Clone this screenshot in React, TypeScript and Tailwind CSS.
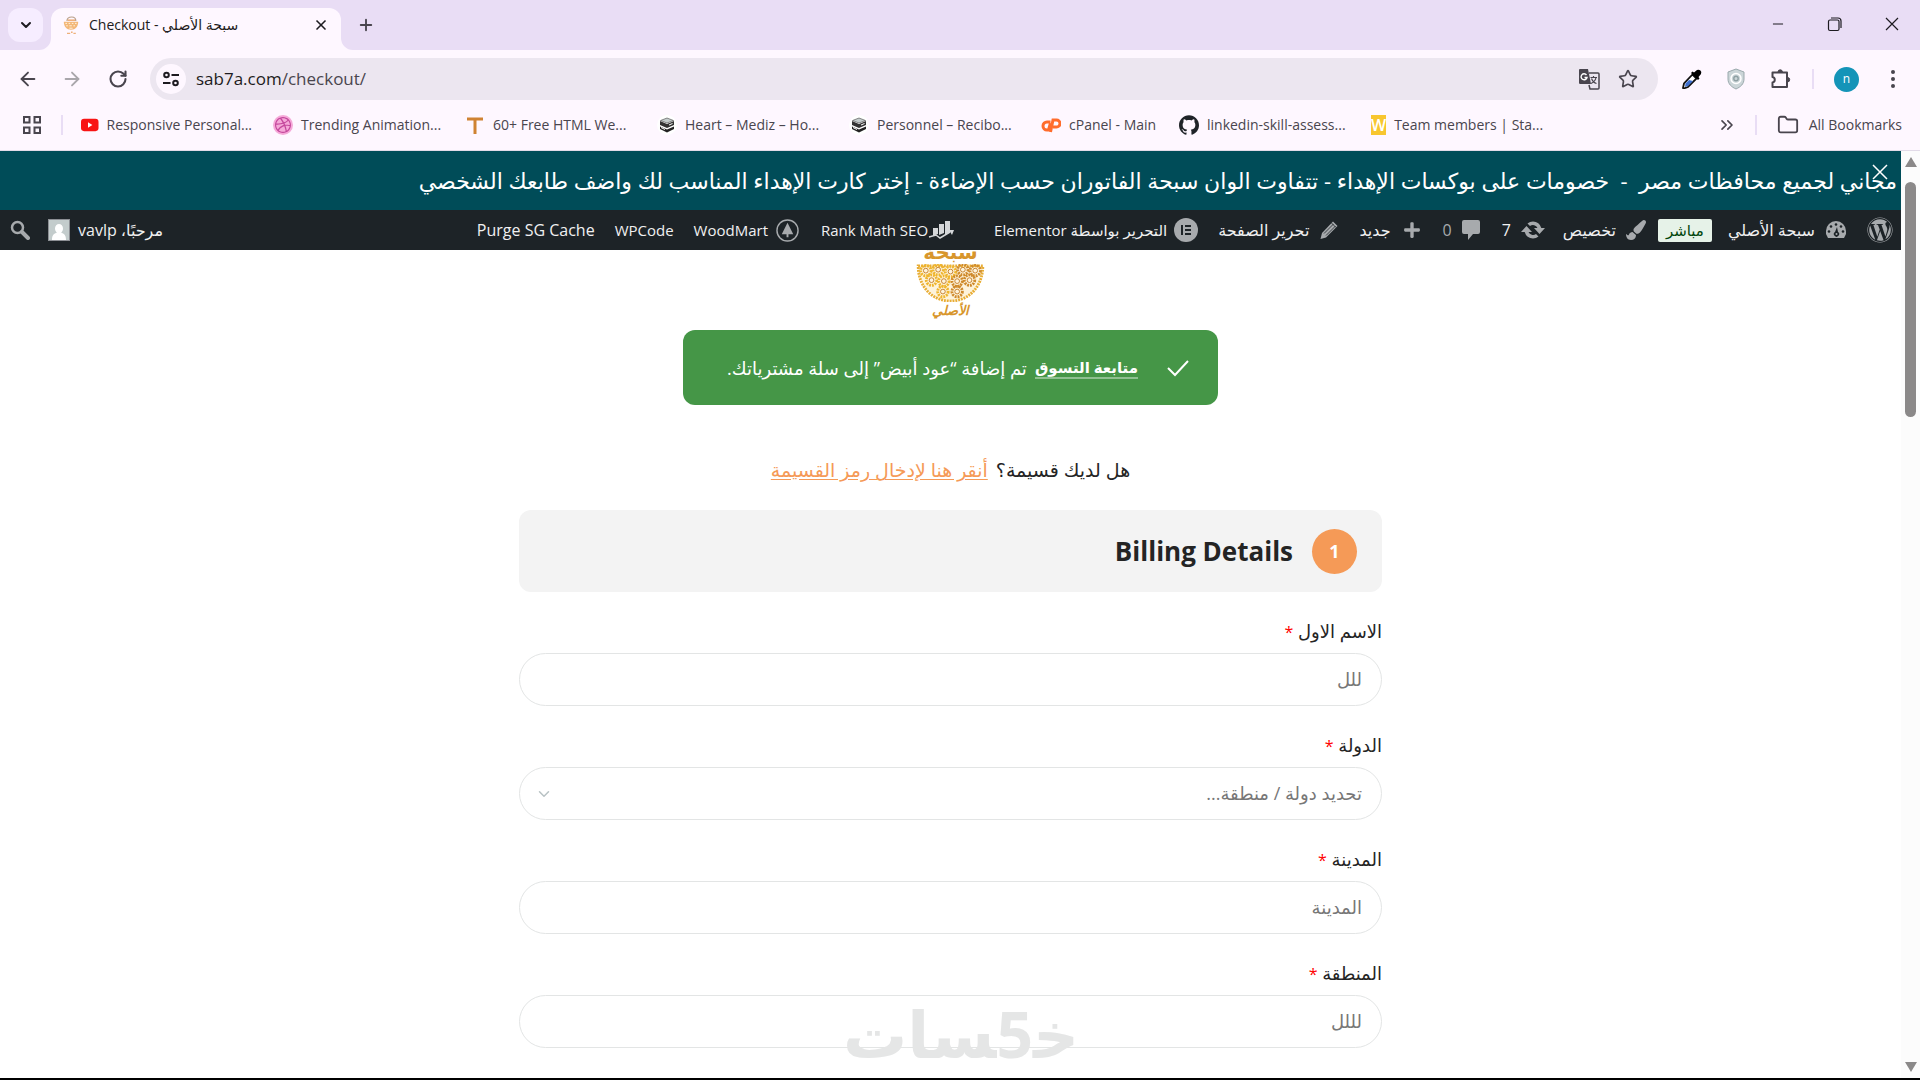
import React from 'react';
import { FaWordpress, FaPlus, FaPaintBrush } from 'react-icons/fa';
import { SiDribbble, SiGithub } from 'react-icons/si';
import { ArrowLeft, ArrowRight, ChevronDown, ChevronsRight, Folder, Minus, Plus, RotateCw, Star, X } from 'lucide-react';

const barText = "font-['Open_Sans','DejaVu_Sans',sans-serif]";

function SiteIcon({ className }: { className: string }) {
  return (
    <svg viewBox="0 0 20 24" className={className} aria-hidden="true">
      <path d="M5 7C5 3 8 2 11 2s5 2 5 5" fill="none" stroke="#b9a08a" strokeWidth="1.500" />
      <path d="M6 6h9" stroke="#eeb07a" strokeWidth="2" />
      <path d="M1 8h18c0 6-3.500 10-9 10S1 14 1 8z" fill="#f3b778" />
      <path d="M3 10h2m2 0h2m2 0h2m2 0h2M4 13h2m2 0h3m2 0h2M8 16h4" stroke="#fff3e0" strokeWidth="1.200" />
      <path d="M5 22.500h4m1-1.500h2m1 1.500h3" stroke="#eeb07a" strokeWidth="1.800" />
    </svg>
  );
}

function BoxIcon() {
  return (
    <svg viewBox="0 0 20 20" className="h-5 w-5" aria-hidden="true">
      <circle cx="10" cy="10" r="10" fill="#fff" />
      <path d="M3 6v4l7 3 7-3V6l-7 3z" fill="#333" />
      <path d="M10 3 3.500 5.500l6.500 2.500 6.500-2.500z" fill="#c4cccc" stroke="#444" strokeWidth=".6" />
      <path d="M3 11.500V14l7 3.500 7-3.500v-2.500l-7 3z" fill="#222" />
      <path d="m12 10 3.500-1.500M4 12.500l4 2" stroke="#fff" />
    </svg>
  );
}

const bookmarks = [
  {
    label: 'Responsive Personal...',
    icon: (
      <svg viewBox="0 0 20 20" className="h-5 w-5">
        <rect y="3" width="20" height="14" rx="3.500" fill="#f81414" />
        <path d="M8 7v6l5-3z" fill="#fff" />
      </svg>
    ),
  },
  {
    label: 'Trending Animation...',
    icon: (
      <span className="flex h-5 w-5 items-center justify-center rounded-full bg-[#f5a8d8]">
        <SiDribbble className="h-4 w-4 text-[#c4479c]" />
      </span>
    ),
  },
  {
    label: '60+ Free HTML We...',
    icon: (
      <svg viewBox="0 0 20 20" className="h-5 w-5">
        <path d="M2 4h16M10 4v15" fill="none" stroke="#cf8333" strokeWidth="3" />
      </svg>
    ),
  },
  { label: 'Heart – Mediz – Ho...', icon: <BoxIcon /> },
  { label: 'Personnel – Recibo...', icon: <BoxIcon /> },
  {
    label: 'cPanel - Main',
    short: true,
    icon: (
      <svg viewBox="0 0 20 20" className="h-5 w-5" fill="none" stroke="#ff6c2c" strokeWidth="3">
        <path d="M9.500 7H6a4 4 0 0 0 0 8h1.500l2-7" />
        <path d="m9.500 17 2.500-12h3.500a3.500 3.500 0 0 1 0 7H12" />
      </svg>
    ),
  },
  { label: 'linkedin-skill-assess...', icon: <SiGithub className="h-5 w-5 text-[#1f2328]" /> },
  {
    label: 'Team members | Sta...',
    icon: <span className="flex h-5 w-5 items-center justify-center bg-[#f8c62f] text-base font-semibold text-white">W</span>,
  },
];

function TabStrip() {
  return (
    <div className="flex h-[50px] items-end bg-[#e9ddf5] text-[#1d1b20]">
      <button aria-label="Search tabs" className="mb-2 ml-2 flex h-[34px] w-[35px] items-center justify-center rounded-xl bg-[#f6edff]">
        <ChevronDown className="h-4 w-4" strokeWidth={3} />
      </button>
      <svg viewBox="0 0 12 12" className="-ml-1 h-3 w-3">
        <path d="M12 0v12H0A12 12 0 0 0 12 0z" fill="#fef7ff" />
      </svg>
      <div className="flex h-[42px] w-[290px] items-center rounded-t-xl bg-[#fef7ff] px-3 pb-2">
        <SiteIcon className="h-5 w-4" />
        <span className="ml-[10px] flex-1 text-sm whitespace-nowrap">Checkout - سبحة الأصلي</span>
        <button aria-label="Close tab">
          <X className="h-4 w-4" strokeWidth={2.5} />
        </button>
      </div>
      <svg viewBox="0 0 12 12" className="h-3 w-3">
        <path d="M0 0v12h12A12 12 0 0 1 0 0z" fill="#fef7ff" />
      </svg>
      <button aria-label="New tab" className="mb-4 ml-1">
        <Plus className="h-[18px] w-[18px] text-[#49454e]" strokeWidth={2.5} />
      </button>
      <div className="mr-5 mb-[18px] ml-auto flex items-center gap-[41px]">
        <button aria-label="Minimize">
          <Minus className="h-4 w-4" strokeWidth={1.5} />
        </button>
        <button aria-label="Restore">
          <svg viewBox="0 0 16 16" className="h-4 w-4" fill="none" stroke="#1d1b20" strokeWidth="1.200">
            <rect x="1.500" y="4" width="10.500" height="10.500" rx="1.500" />
            <path d="M4 2h7a3 3 0 0 1 3 3v7" />
          </svg>
        </button>
        <button aria-label="Close window">
          <svg viewBox="0 0 16 16" className="h-4 w-4" stroke="#1d1b20" strokeWidth="1.200">
            <path d="m2 2 12 12M14 2 2 14" />
          </svg>
        </button>
      </div>
    </div>
  );
}

function Toolbar() {
  return (
    <div className="flex h-[58px] items-center bg-[#fef7ff] px-[17px] text-[#49454e]">
      <button aria-label="Back">
        <ArrowLeft className="h-[22px] w-[22px]" />
      </button>
      <button aria-label="Forward" className="ml-[22px] text-[#a9a6ab]">
        <ArrowRight className="h-[22px] w-[22px]" />
      </button>
      <button aria-label="Reload" className="ml-[25px]">
        <RotateCw className="h-5 w-5" strokeWidth={2.5} />
      </button>
      <div className="ml-[22px] flex h-[42px] flex-1 items-center rounded-full bg-[#ece6f0] pr-5 pl-[6px]">
        <button aria-label="Site information" className="flex h-[30px] w-[30px] items-center justify-center rounded-full bg-[#fef7ff]">
          <svg viewBox="0 0 16 16" className="h-4 w-4" fill="none" stroke="#1d1b20" strokeWidth="2">
            <circle cx="3.500" cy="4" r="2.300" />
            <path d="M8.500 4H16M0 12h7.500" />
            <circle cx="12.500" cy="12" r="2.300" />
          </svg>
        </button>
        <div className="ml-[10px] flex-1 text-[17px] text-[#49454e]">
          <a href="#checkout">
            <span className="text-[#1d1b20]">sab7a.com</span>/checkout/
          </a>
        </div>
        <button aria-label="Translate this page">
          <svg viewBox="0 0 22 22" className="h-[22px] w-[22px]">
            <path d="M2 1h8l3 15H2a1.500 1.500 0 0 1-1-1V2a1 1 0 0 1 1-1z" fill="#49454e" />
            <path d="M11 5h9a1 1 0 0 1 1 1v14a1 1 0 0 1-1 1h-8l-1-4" fill="none" stroke="#49454e" strokeWidth="1.500" />
            <path d="M8.500 7A3 3 0 1 0 9 9.500H6.500" fill="none" stroke="#fff" strokeWidth="1.400" />
            <path d="M12.500 9.500H19M15.500 8v1.500M18 9.500c-.500 3-3 5-5 6M13.500 10.500c1 2.500 3 4.500 5 5" fill="none" stroke="#49454e" strokeWidth="1.200" />
          </svg>
        </button>
        <button aria-label="Bookmark this tab" className="ml-[18px]">
          <Star className="h-5 w-5" />
        </button>
      </div>
      <div className="ml-6 flex items-center">
        <button aria-label="Color picker">
          <svg viewBox="0 0 20 20" className="h-5 w-5">
            <path d="m10.500 5.500 4 4L6 18l-4.500 1.500L1 19l1-4.500z" fill="#fff" stroke="#111" strokeWidth="1.800" />
            <path d="m7 11 4 1-5 5-3 1 .500-3.500z" fill="#3d6fd0" />
            <path d="m9 4 7 7 1.500-1.500-1-1.500 2.500-3a3 3 0 0 0-4-4l-3 2.500L10.500 2.500z" fill="#000" />
          </svg>
        </button>
        <button aria-label="Shield" className="ml-6">
          <svg viewBox="0 0 20 22" className="h-[22px] w-5">
            <path d="m10 1 8 3v7c0 5-3.500 8-8 10-4.500-2-8-5-8-10V4z" fill="#cbd5d8" stroke="#9aa9ac" />
            <circle cx="10" cy="10.500" r="5" fill="none" stroke="#fff" strokeWidth="1.500" />
            <circle cx="10" cy="10.500" r="2.200" fill="none" stroke="#8fa0a3" strokeWidth="1.400" />
          </svg>
        </button>
        <button aria-label="Extensions" className="ml-6">
          <svg viewBox="0 0 22 22" className="h-[22px] w-[22px]" fill="none" stroke="#49454e" strokeWidth="2" strokeLinejoin="round">
            <path d="M2.500 4.500H17v14.500H2.500v-4.500a2.800 2.800 0 0 0 0-5.500z" />
            <path d="M8 4a2.200 2.200 0 0 1 4.400 0zM17.500 9.500a2.200 2.200 0 0 1 0 4.400z" fill="#49454e" strokeWidth="1" />
          </svg>
        </button>
        <span className="ml-5 h-5 w-[2px] bg-[#e9ddf5]" />
        <button aria-label="Profile" className="ml-5 flex h-[25px] w-[25px] items-center justify-center rounded-full bg-[#1494b8] text-xs text-white">n</button>
        <button aria-label="Menu" className="ml-6">
          <svg viewBox="0 0 20 20" className="h-5 w-5" fill="#49454e">
            <circle cx="10" cy="3" r="2" />
            <circle cx="10" cy="10" r="2" />
            <circle cx="10" cy="17" r="2" />
          </svg>
        </button>
      </div>
    </div>
  );
}

function BookmarksBar() {
  return (
    <div className="flex h-[43px] items-center border-b border-[#e2dbe8] bg-[#fef7ff] pr-[18px] pb-2 pl-[23px] text-sm text-[#49454e]">
      <button aria-label="Apps">
        <svg viewBox="0 0 18 18" className="h-[18px] w-[18px]" fill="none" stroke="#49454e" strokeWidth="2">
          <path d="M1 1h5.500v5.500H1zM11.500 1H17v5.500h-5.500zM1 11.500h5.500V17H1zM11.500 11.500H17V17h-5.500z" />
        </svg>
      </button>
      <span className="ml-5 h-5 w-[2px] bg-[#e9ddf5]" />
      <div className="ml-[18px] flex flex-1 gap-[21px]">
        {bookmarks.map((b) => (
          <a key={b.label} href="#bookmark" className={`flex items-center gap-2 whitespace-nowrap ${b.short ? 'w-[117px]' : 'w-[171px]'}`}>
            {b.icon}
            <span>{b.label}</span>
          </a>
        ))}
      </div>
      <button aria-label="More bookmarks">
        <ChevronsRight className="h-5 w-5" />
      </button>
      <span className="ml-[18px] h-5 w-[2px] bg-[#e9ddf5]" />
      <button className="ml-5 flex items-center gap-[10px]">
        <Folder className="h-[22px] w-[22px]" />
        All Bookmarks
      </button>
    </div>
  );
}

function Banner() {
  return (
    <div className="relative flex h-[59px] items-center overflow-hidden bg-[#004c58] px-1 text-white">
      <p className="flex-1 text-[22px] whitespace-pre">
        {'مجاني لجميع محافظات مصر  -  خصومات على بوكسات الإهداء - تتفاوت الوان سبحة الفاتوران حسب الإضاءة - إختر كارت الإهداء المناسب لك واضف طابعك الشخصي'}
      </p>
      <button aria-label="إغلاق" className="absolute top-[13px] right-[13px]">
        <svg viewBox="0 0 16 16" className="h-4 w-4" stroke="#fff" strokeWidth="1.500">
          <path d="m1 1 14 14M15 1 1 15" />
        </svg>
      </button>
    </div>
  );
}

const grey = 'text-[#a7aaad]';

function AdminBar() {
  return (
    <nav className={`flex h-10 items-center bg-[#1d2327] pr-2 pl-[10px] text-base whitespace-nowrap text-[#f0f0f1] ${barText}`}>
      <a href="#wp" aria-label="WordPress">
        <FaWordpress className={`h-[26px] w-[26px] ${grey}`} />
      </a>
      <a href="#site" className="mr-5 flex items-center gap-[10px]">
        <svg viewBox="0 0 22 20" className="h-5 w-[22px]">
          <path d="M11 1A10 10 0 0 0 1 11v3l2 4h16l2-4v-3A10 10 0 0 0 11 1z" fill="#a7aaad" />
          <g fill="#1d2327">
            <circle cx="11" cy="4.500" r="1.300" />
            <circle cx="6" cy="6.500" r="1.300" />
            <circle cx="16" cy="6.500" r="1.300" />
            <circle cx="4" cy="11.500" r="1.300" />
            <circle cx="18" cy="11.500" r="1.300" />
            <path d="m12 7-2 5a2.600 2.600 0 1 0 3 0z" />
          </g>
          <circle cx="11.500" cy="14" r="1" fill="#a7aaad" />
        </svg>
        سبحة الأصلي
      </a>
      <a href="#live" className="mr-4 rounded-xs bg-[#e6f2e8] px-2 text-[15px] leading-[23px] text-[#00450c]">
        مباشر
      </a>
      <a href="#customize" className="mr-3 flex items-center gap-[10px]">
        <FaPaintBrush className={`h-5 w-5 ${grey}`} />
        تخصيص
      </a>
      <a href="#updates" className="mr-[18px] flex items-center gap-[10px]">
        <svg viewBox="0 0 24 20" className="h-5 w-6" fill="#a7aaad">
          <path d="M12 1.500a8.500 8.500 0 0 1 8.300 6.500H24l-5.500 6L13 8h3.500A5 5 0 0 0 9 6L6.500 3.500A8.500 8.500 0 0 1 12 1.500z" />
          <path d="M12 18.500A8.500 8.500 0 0 1 3.700 12H0l5.500-6L11 12H7.500a5 5 0 0 0 7.500 2l2.500 2.500a8.500 8.500 0 0 1-5.500 2z" />
        </svg>
        7
      </a>
      <a href="#comments" className={`mr-[22px] flex items-center gap-[10px] ${grey}`}>
        <svg viewBox="0 0 18 20" className="h-5 w-[18px]" fill="#a7aaad">
          <path d="M2 0h14a2 2 0 0 1 2 2v10a2 2 0 0 1-2 2h-5l-5 6v-6H2a2 2 0 0 1-2-2V2a2 2 0 0 1 2-2z" />
        </svg>
        0
      </a>
      <a href="#new" className="mr-[22px] flex items-center gap-3">
        <FaPlus className={`h-[18px] w-[18px] ${grey}`} />
        جديد
      </a>
      <a href="#edit" className="mr-5 flex items-center gap-[10px]">
        <svg viewBox="0 0 20 20" className="h-5 w-5">
          <path d="M14 1.500 18.500 6 7 17.500l-5.500 1.500L3 13z" fill="#a7aaad" />
          <path d="m5 13.500 9.500-9.500M7 15.500l9.500-9.500M12.500 3l4.500 4.500" stroke="#1d2327" strokeWidth=".8" />
        </svg>
        تحرير الصفحة
      </a>
      <a href="#elementor" className="mr-5 flex items-center gap-[7px] text-[15px]">
        <svg viewBox="0 0 24 24" className="h-6 w-6">
          <circle cx="12" cy="12" r="12" fill="#a7aaad" />
          <path d="M8 7v10M11 8h6M11 12h6M11 16h6" stroke="#1d2327" strokeWidth="2" />
        </svg>
        التحرير بواسطة Elementor
      </a>
      <a href="#rankmath" className="mr-10 flex items-center text-[15px]">
        <svg viewBox="0 0 26 20" className="h-5 w-[26px]" fill="#d5d7d9">
          <path d="M5 8h5v6l-5 2zM11 4h5v9l-5 2zM17 1h5v11l-5 3z" />
          <path d="m1 17 7-2 4 3 10-6" fill="none" stroke="#d5d7d9" strokeWidth="1.500" />
          <path d="m21 10 5 0-2 5z" />
        </svg>
        Rank Math SEO
      </a>
      <a href="#woodmart" className="mr-[22px] flex items-center gap-2 text-[15px]">
        <svg viewBox="0 0 24 24" className="h-[23px] w-[23px]">
          <circle cx="12" cy="12" r="11" fill="none" stroke="#a7aaad" strokeWidth="1.500" />
          <path d="m12 4 6 12h-5v3h-2v-3H6z" fill="#a7aaad" />
        </svg>
        WoodMart
      </a>
      <a href="#wpcode" className="mr-5 text-[15px]">WPCode</a>
      <a href="#purge" className="mr-5">Purge SG Cache</a>
      <a href="#profile" className="mr-auto flex items-center gap-2">
        <bdi>مرحبًا، vavlp</bdi>
        <svg viewBox="0 0 22 22" className="h-[22px] w-[22px]">
          <rect width="22" height="22" fill="#c3cccc" stroke="#8c8f94" strokeWidth="2" />
          <path d="M11 5a4 4.500 0 0 1 4 4.500c0 2-1 3.500-2 4 3 1 5 2.500 5 7.500H4c0-5 2-6.500 5-7.500-1-.500-2-2-2-4A4 4.500 0 0 1 11 5z" fill="#fff" />
        </svg>
      </a>
      <button aria-label="بحث" className="mr-[18px]">
        <svg viewBox="0 0 20 20" className="h-5 w-5" fill="none" stroke="#a7aaad">
          <circle cx="7.500" cy="7.500" r="5.500" strokeWidth="2.500" />
          <path d="m12 12 6 6" strokeWidth="4" strokeLinecap="round" />
        </svg>
      </button>
    </nav>
  );
}

const petals = [
  [9, 7], [22, 6], [35, 8], [48, 6], [61, 7], [15, 17], [28, 18], [42, 18], [55, 17], [27, 29], [42, 29],
];

function Logo() {
  return (
    <div className="flex h-[70px] flex-col items-center overflow-hidden text-[#d8962c]">
      <span className="-mt-2 text-xl leading-5 font-bold">سبحة</span>
      <svg viewBox="0 0 70 40" className="mt-[2px] h-[38px] w-[69px]" fill="none" stroke="#e8ad35">
        <path d="M1 2h68c0 22-15 37-34 37S1 24 1 2z" strokeWidth="3" strokeDasharray="2 1" fill="#fdf3dc" />
        {petals.map(([x, y]) => (
          <g key={`${x}-${y}`}>
            <circle cx={x} cy={y} r="5.500" strokeWidth="3" strokeDasharray="2 1" stroke={x > 40 ? '#cf8a2c' : '#efb52f'} />
            <circle cx={x} cy={y} r="2.500" stroke="#c77f2a" />
          </g>
        ))}
      </svg>
      <span className="text-[13px] leading-4 font-bold italic">الأصلي</span>
    </div>
  );
}

const inputStyle =
  'h-[53px] w-full appearance-none rounded-full border border-[#e3e5e5] bg-transparent px-[19px] pb-[2px] text-lg text-[#777] outline-none placeholder:text-[#777]';

function Field({ id, label, children }: { id: string; label: string; children: React.ReactNode }) {
  return (
    <div>
      <label htmlFor={id} className="mb-2 block text-lg leading-7 text-[#242424]">
        {label} <span className="text-base text-[#f00]">*</span>
      </label>
      {children}
    </div>
  );
}

function CheckoutPage() {
  return (
    <main className="flex flex-1 flex-col items-center overflow-hidden bg-white px-4">
      <Logo />
      <div className="mt-[10px] flex h-[75px] w-full max-w-[535px] shrink-0 items-center rounded-xl bg-[#459647] px-7 text-white">
        <svg viewBox="0 0 24 24" className="h-6 w-6" fill="none" stroke="#fff" strokeWidth="2">
          <path d="m2 12 7 7L22 5" />
        </svg>
        <p className="mr-7 flex items-center gap-2 text-lg whitespace-nowrap">
          <a href="#shop" className="border-b-2 border-white/40 text-[15px] leading-5 font-semibold">متابعة التسوق</a>
          تم إضافة “عود أبيض” إلى سلة مشترياتك.
        </p>
      </div>
      <p className="mt-[50px] flex gap-2 text-[19px] leading-[30px] text-[#242424]">
        هل لديك قسيمة؟
        <a href="#coupon" className="text-[#f59a57] underline underline-offset-2">أنقر هنا لإدخال رمز القسيمة</a>
      </p>
      <form className="mt-[25px] flex w-full max-w-[863px] flex-col">
        <div className="flex h-[82px] items-center gap-[19px] rounded-xl bg-[#f3f3f3] px-[25px]">
          <span className="flex h-[45px] w-[45px] items-center justify-center rounded-full bg-[#f59a57] text-lg font-bold text-white">1</span>
          <h1 className="text-[26px] font-bold text-[#242424]">Billing Details</h1>
        </div>
        <div className="mt-[25px] flex flex-col gap-[25px]">
          <Field id="first-name" label="الاسم الاول">
            <input id="first-name" className={inputStyle} defaultValue="للل" />
          </Field>
          <Field id="country" label="الدولة">
            <div className="relative">
              <select id="country" className={inputStyle}>
                <option>تحديد دولة / منطقة...</option>
              </select>
              <ChevronDown className="pointer-events-none absolute top-[18px] left-4 h-[18px] w-[18px] text-[#b8c2c4]" />
            </div>
          </Field>
          <Field id="city" label="المدينة">
            <input id="city" className={inputStyle} placeholder="المدينة" />
          </Field>
          <Field id="area" label="المنطقة">
            <input id="area" className={inputStyle} defaultValue="لللل" />
          </Field>
        </div>
      </form>
    </main>
  );
}

function Scrollbar() {
  return (
    <div className="flex w-[19px] flex-col items-center bg-[#fcfcfc] py-[6px]">
      <svg viewBox="0 0 12 10" className="h-[10px] w-3" fill="#8b8989">
        <path d="m6 0 6 10H0z" />
      </svg>
      <div className="mt-[15px] h-[235px] w-[11px] rounded-full bg-[#8b8989]" />
      <svg viewBox="0 0 12 10" className="mt-auto h-[10px] w-3" fill="#8b8989">
        <path d="M0 0h12L6 10z" />
      </svg>
    </div>
  );
}

function App() {
  return (
    <div className={`flex h-screen flex-col overflow-hidden border-b-2 border-black ${barText}`}>
      <TabStrip />
      <Toolbar />
      <BookmarksBar />
      <div className="relative flex min-h-0 flex-1">
        <div dir="rtl" className="flex min-w-0 flex-1 flex-col">
          <Banner />
          <AdminBar />
          <CheckoutPage />
        </div>
        <Scrollbar />
        <div dir="rtl" className="pointer-events-none absolute bottom-3 left-[843px] text-[64px] leading-none font-bold text-[#e5e6e6]">
          {'خ\u200d5\u200dسات'}
        </div>
      </div>
    </div>
  );
}

export default App;
